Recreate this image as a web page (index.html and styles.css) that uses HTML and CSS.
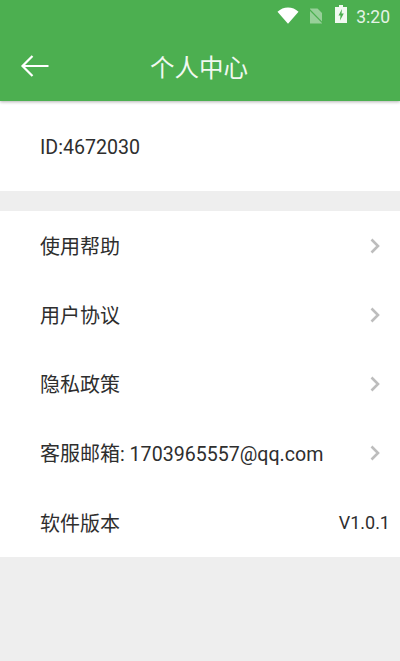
FILE: index.html
```html
<!DOCTYPE html>
<html lang="zh">
<head>
<meta charset="utf-8">
<title>个人中心</title>
<link rel="stylesheet" href="styles.css">
</head>
<body>
<header class="appbar">
  <div class="status">
    <svg class="ic-wifi" width="22" height="17" viewBox="0 0 22 17"><path d="M0.500 4.700C3.500 2 7 0.500 11 0.500s7.500 1.500 10.500 4.200L11 16.800z" fill="#fff"/></svg>
    <svg class="ic-sim" width="16" height="16" viewBox="0 0 16 16"><path d="M2 0.500H9.500L14 5V15.500H2z" fill="#fff" fill-opacity=".42"/><path d="M0.500 0.500L15.500 15.800" stroke="#4caf50" stroke-width="1.200"/></svg>
    <svg class="ic-batt" width="12" height="18" viewBox="0 0 12 18"><path d="M4 0H8V2H12V18H0V2H4z" fill="#fff" fill-opacity=".92"/><path d="M7 4L3.500 10.500H5.500L5 15.500L8.800 8.500H6.500z" fill="#4caf50"/></svg>
    <span class="clock">3:20</span>
  </div>
  <div class="bar">
    <svg class="back" width="30" height="24" viewBox="0 0 30 24"><path d="M28.500 12H2.500M12.500 2L2.500 12L12.500 22" fill="none" stroke="#fff" stroke-width="2.200"/></svg>
    <h1 class="title">个人中心</h1>
  </div>
</header>
<main class="content">
  <section class="card id-card">
    <div class="row id-row"><span class="latin">ID:4672030</span></div>
  </section>
  <section class="card list">
    <div class="row"><span>使用帮助</span><svg class="chev" width="12" height="18" viewBox="0 0 12 18"><path d="M2.500 2.500L9 9L2.500 15.500" fill="none" stroke="#bdbdbd" stroke-width="2.600"/></svg></div>
    <div class="row"><span>用户协议</span><svg class="chev" width="12" height="18" viewBox="0 0 12 18"><path d="M2.500 2.500L9 9L2.500 15.500" fill="none" stroke="#bdbdbd" stroke-width="2.600"/></svg></div>
    <div class="row"><span>隐私政策</span><svg class="chev" width="12" height="18" viewBox="0 0 12 18"><path d="M2.500 2.500L9 9L2.500 15.500" fill="none" stroke="#bdbdbd" stroke-width="2.600"/></svg></div>
    <div class="row"><span class="mixed">客服邮箱<span class="latin">: 1703965557@qq.com</span></span><svg class="chev" width="12" height="18" viewBox="0 0 12 18"><path d="M2.500 2.500L9 9L2.500 15.500" fill="none" stroke="#bdbdbd" stroke-width="2.600"/></svg></div>
    <div class="row version"><span>软件版本</span><span class="ver">V1.0.1</span></div>
  </section>
</main>
</body>
</html>
```
FILE: styles.css
```css
* { box-sizing: border-box; }
html, body { margin: 0; padding: 0; }
body {
  width: 400px;
  height: 661px;
  overflow: hidden;
  background: #eeeeee;
  font-family: Roboto, "Noto Sans CJK SC", sans-serif;
  color: #2e2e2e;
}
.appbar {
  height: 101px;
  background: #4caf50;
  box-shadow: 0 1px 3px rgba(0, 0, 0, .3);
  position: relative;
}
.status {
  height: 31px;
  display: flex;
  align-items: center;
  justify-content: flex-end;
  padding-right: 10px;
  color: #e4f3e5;
}
.ic-wifi { margin-right: 9px; }
.ic-sim { margin: 1px 11px 0 0; }
.ic-batt { margin: 0 9px 3px 0; }
.clock { font-size: 17.500px; line-height: 20px; margin-top: 2px; }
.bar {
  height: 70px;
  display: flex;
  align-items: center;
  padding-left: 20px;
}
.back { flex: none; }
.title {
  margin: 0 0 0 100px;
  font-size: 24.500px;
  font-weight: 400;
  color: #fff;
  opacity: .92;
}
.content { display: flex; flex-direction: column; gap: 20px; }
.card { background: #fff; }
.id-card { height: 90px; display: flex; align-items: center; }
.row {
  height: 69.200px;
  padding: 0 10px 0 40px;
  display: flex;
  align-items: center;
  justify-content: space-between;
  font-size: 20px;
}
.id-row { height: auto; padding-top: 2px; }
.latin { font-size: 19.600px; }
.mixed { margin-bottom: 2px; }
.chev { margin-right: 9px; }
.ver { font-size: 18px; }
```
